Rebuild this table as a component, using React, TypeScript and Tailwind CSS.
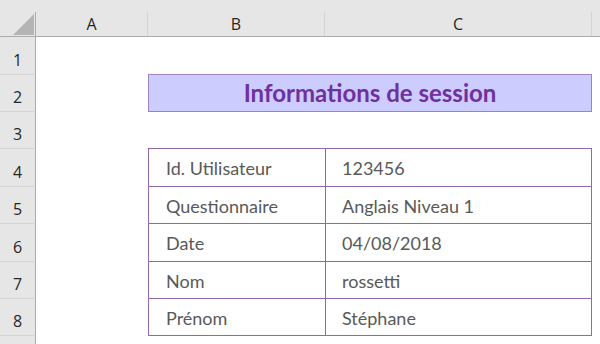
import React from "react";

const rows = [
  { n: 1, h: "h-[38px]" },
  { n: 2, h: "h-[37px]" },
  { n: 3, h: "h-[37px]" },
  { n: 4, h: "h-[38px]" },
  { n: 5, h: "h-[37px]" },
  { n: 6, h: "h-[38px]" },
  { n: 7, h: "h-[37px]" },
  { n: 8, h: "h-[37px]" },
];

const info: Record<number, [string, string]> = {
  4: ["Id. Utilisateur", "123456"],
  5: ["Questionnaire", "Anglais Niveau 1"],
  6: ["Date", "04/08/2018"],
  7: ["Nom", "rossetti"],
  8: ["Prénom", "Stéphane"],
};

function ColHead({ label, w }: { label: string; w: string }) {
  return (
    <div className={`${w} h-full flex flex-col`}>
      <div className="mt-[12px] flex-1 border-r border-[#d4d4d4] flex items-center justify-center text-[16px] text-[#262626]">
        {label}
      </div>
    </div>
  );
}

export default function App() {
  return (
    <div className="w-[600px] h-[344px] overflow-hidden bg-white font-['Open_Sans',sans-serif]">
      {/* column headers */}
      <div className="flex h-[37px] bg-[#e6e6e6] border-b border-[#ababab]">
        <div className="w-[36px] h-full flex flex-col">
          <div className="flex-1 border-r border-[#ababab] mt-[12px]">
            <svg width="36" height="25" className="block">
              <polygon points="13,23 34,23 34,2" fill="#b4b4b4" />
            </svg>
          </div>
        </div>
        <ColHead label="A" w="w-[112px]" />
        <ColHead label="B" w="w-[177px]" />
        <ColHead label="C" w="w-[267px]" />
        <div className="flex-1" />
      </div>

      {rows.map((r) => (
        <div key={r.n} className={`flex ${r.h}`}>
          <div className="w-[36px] shrink-0 bg-[#e6e6e6] border-r border-b border-r-[#ababab] border-b-[#d4d4d4] flex items-end justify-center pb-[4px] text-[16px] leading-[20px] text-[#262626]">
            {r.n}
          </div>
          <div className="w-[112px] shrink-0" />
          {r.n === 2 && (
            <div className="w-[444px] h-[38px] -mt-px bg-[#ccccff] border border-[#9e82c4] flex items-center justify-center font-['Lato',sans-serif] font-bold text-[24px] text-[#7030a0]">
              Informations de session
            </div>
          )}
          {info[r.n] && (
            <div
              className={`w-[444px] flex border-x border-b border-[#8e6aaa] font-['Lato',sans-serif] text-[18px] text-[#595959] ${
                r.n === 4 ? "border-t -mt-px h-[39px]" : ""
              }`}
            >
              <div className="w-[177px] border-r border-[#8e6aaa] flex items-center pl-[17px] pt-[2px]">
                {info[r.n][0]}
              </div>
              <div className="flex-1 flex items-center pl-[16px] pt-[2px]">
                {info[r.n][1]}
              </div>
            </div>
          )}
        </div>
      ))}
      <div className="flex h-[8px]">
        <div className="w-[36px] bg-[#e6e6e6] border-r border-[#ababab]" />
      </div>
    </div>
  );
}
